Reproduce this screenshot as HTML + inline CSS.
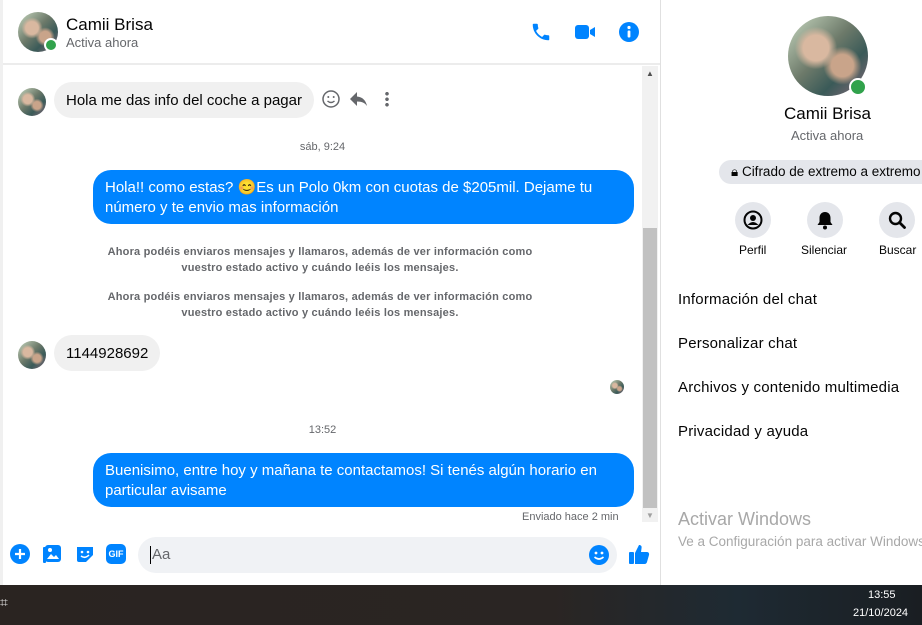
<!DOCTYPE html>
<html><head><meta charset="utf-8"><style>
*{box-sizing:border-box;margin:0;padding:0}
body{width:922px;height:625px;overflow:hidden;background:#fff;font-family:"Liberation Sans",sans-serif;position:relative;color:#050505}
.abs{position:absolute}
.av{border-radius:50%;background:radial-gradient(circle at 35% 40%,#d9b8a0 0 18%,transparent 30%),radial-gradient(circle at 68% 62%,#c9a48a 0 15%,transparent 26%),linear-gradient(135deg,#c8d8c0,#6d7a6a 45%,#3a5a58 70%,#8a6a7a);}
.dot{border-radius:50%;background:#31a24c;border:2px solid #fff}
.bub{border-radius:18px;font-size:15px;line-height:20px;padding:9px 12px 7px}
.in{background:#f0f0f0}
.out{background:#0084ff;color:#fff}
.sys{font-size:12px;color:#65676b;text-align:center;line-height:16px;font-weight:bold}
.menu{font-size:15px;color:#050505;left:678px;letter-spacing:0.2px}
.cb{width:36px;height:36px;border-radius:50%;background:#e4e6eb;display:flex;align-items:center;justify-content:center}
</style></head><body>
<div class="abs" style="left:0;top:0;width:3px;height:585px;background:#f0f0f0"></div>
<div class="abs" style="left:660px;top:0;width:1px;height:585px;background:#e0e0e0"></div>
<div class="abs av" style="left:18px;top:12px;width:40px;height:40px"></div>
<div class="abs dot" style="left:44px;top:38px;width:14px;height:14px"></div>
<div class="abs" style="left:66px;top:15px;font-size:17px">Camii Brisa</div>
<div class="abs" style="left:66px;top:35px;font-size:13px;color:#65676b">Activa ahora</div>
<svg class="abs" style="left:530px;top:21px" width="22" height="22" viewBox="0 0 24 24"><path fill="#0084ff" d="M6.6 10.8c1.4 2.8 3.8 5.1 6.6 6.6l2.2-2.2c.3-.3.7-.4 1-.2 1.1.4 2.3.6 3.6.6.6 0 1 .4 1 1V20c0 .6-.4 1-1 1C10.6 21 3 13.4 3 4c0-.6.4-1 1-1h3.5c.6 0 1 .4 1 1 0 1.3.2 2.5.6 3.6.1.3 0 .7-.2 1z"/></svg>
<svg class="abs" style="left:574px;top:22px" width="22" height="20" viewBox="0 0 22 20"><rect x="1" y="3" width="14" height="14" rx="3" fill="#0084ff"/><path d="M16 8l5-3v10l-5-3z" fill="#0084ff"/></svg>
<svg class="abs" style="left:618px;top:21px" width="22" height="22" viewBox="0 0 22 22"><circle cx="11" cy="11" r="10" fill="#0084ff"/><circle cx="11" cy="6.5" r="1.6" fill="#fff"/><rect x="9.6" y="9.5" width="2.8" height="7" rx="1" fill="#fff"/></svg>
<div class="abs" style="left:3px;top:63px;width:657px;height:2px;background:#ececec"></div>
<div class="abs" style="left:642px;top:66px;width:16px;height:456px;background:#f1f1f1"></div>
<div class="abs" style="left:643px;top:228px;width:14px;height:280px;background:#c1c1c1"></div>
<div class="abs" style="left:646px;top:69px;font-size:8px;color:#505050">▲</div>
<div class="abs" style="left:646px;top:511px;font-size:8px;color:#a0a0a0">▼</div>
<div class="abs av" style="left:18px;top:88px;width:28px;height:28px"></div>
<div class="abs bub in" style="left:54px;top:82px">Hola me das info del coche a pagar</div>
<svg class="abs" style="left:321px;top:89px" width="20" height="20" viewBox="0 0 20 20"><circle cx="10" cy="10" r="8" fill="none" stroke="#65676b" stroke-width="1.5"/><circle cx="7.3" cy="8" r="1" fill="#65676b"/><circle cx="12.7" cy="8" r="1" fill="#65676b"/><path d="M6.5 12q3.5 3 7 0" fill="none" stroke="#65676b" stroke-width="1.4"/></svg>
<svg class="abs" style="left:349px;top:89px" width="20" height="20" viewBox="0 0 20 20"><path d="M8 3L1 10l7 7v-4.5c5 0 8 1.5 10 4.5-1-5-4-9-10-9.5z" fill="#65676b"/></svg>
<div class="abs" style="left:385px;top:91px;width:4px;height:16px;background:radial-gradient(circle,#65676b 1.6px,transparent 2px) 0 0/4px 5.5px"></div>
<div class="abs sys" style="left:3px;top:139px;width:639px;font-weight:normal;font-size:11px">sáb, 9:24</div>
<div class="abs bub out" style="left:93px;top:170px;width:541px;padding:8px 12px 6px">Hola!! como estas? 😊Es un Polo 0km con cuotas de $205mil. Dejame tu número y te envio mas información</div>
<div class="abs sys" style="left:95px;top:244px;width:450px;font-size:11px;letter-spacing:0.2px">Ahora podéis enviaros mensajes y llamaros, además de ver información como vuestro estado activo y cuándo leéis los mensajes.</div>
<div class="abs sys" style="left:95px;top:289px;width:450px;font-size:11px;letter-spacing:0.2px">Ahora podéis enviaros mensajes y llamaros, además de ver información como vuestro estado activo y cuándo leéis los mensajes.</div>
<div class="abs av" style="left:18px;top:341px;width:28px;height:28px"></div>
<div class="abs bub in" style="left:54px;top:335px">1144928692</div>
<div class="abs av" style="left:610px;top:380px;width:14px;height:14px"></div>
<div class="abs sys" style="left:3px;top:422px;width:639px;font-weight:normal;font-size:11px">13:52</div>
<div class="abs bub out" style="left:93px;top:453px;width:541px;padding:8px 12px 6px">Buenisimo, entre hoy y mañana te contactamos! Si tenés algún horario en particular avisame</div>
<div class="abs" style="left:522px;top:511px;font-size:11px;color:#65676b">Enviado hace 2 min</div>
<svg class="abs" style="left:10px;top:544px" width="20" height="20" viewBox="0 0 20 20"><circle cx="10" cy="10" r="10" fill="#0084ff"/><path d="M10 5v10M5 10h10" stroke="#fff" stroke-width="2.2"/></svg>
<svg class="abs" style="left:42px;top:544px" width="20" height="20" viewBox="0 0 20 20"><rect x="3" y="1" width="16" height="17" rx="3" fill="#0084ff"/><rect x="1" y="3" width="3" height="16" rx="1" fill="#0084ff"/><circle cx="8" cy="6" r="2" fill="#fff"/><path d="M5 15l4-5 3 3 2-2 3 4z" fill="#fff"/></svg>
<svg class="abs" style="left:75px;top:544px" width="20" height="20" viewBox="0 0 20 20"><path d="M2 3h16v8l-7 7H4a2 2 0 01-2-2z" fill="#0084ff"/><circle cx="7" cy="8" r="1.3" fill="#fff"/><circle cx="13" cy="8" r="1.3" fill="#fff"/><path d="M6 12q4 3 8-1" stroke="#fff" fill="none" stroke-width="1.5"/></svg>
<div class="abs" style="left:106px;top:544px;width:20px;height:20px;background:#0084ff;border-radius:5px;color:#fff;font-size:9px;font-weight:bold;text-align:center;line-height:20px">GIF</div>
<div class="abs" style="left:138px;top:537px;width:479px;height:36px;background:#f0f2f5;border-radius:18px"></div>
<div class="abs" style="left:150px;top:546px;font-size:15px;color:#65676b;border-left:1px solid #000;padding-left:1px;line-height:18px">Aa</div>
<svg class="abs" style="left:589px;top:545px" width="20" height="20" viewBox="0 0 20 20"><circle cx="10" cy="10" r="10" fill="#0084ff"/><circle cx="7" cy="8" r="1.4" fill="#fff"/><circle cx="13" cy="8" r="1.4" fill="#fff"/><path d="M5.5 12q4.5 4 9 0" stroke="#fff" fill="none" stroke-width="1.6"/></svg>
<svg class="abs" style="left:628px;top:543px" width="22" height="22" viewBox="0 0 22 22"><rect x="1" y="9" width="5" height="12" rx="1" fill="#0084ff"/><path d="M7 10l4-8c2 0 3 1 2.5 3.5L13 9h6c1.5 0 2.5 1.5 2 3l-2 7c-.3 1-1 2-2.5 2H7z" fill="#0084ff"/></svg>
<div class="abs av" style="left:788px;top:16px;width:80px;height:80px"></div>
<div class="abs dot" style="left:849px;top:78px;width:18px;height:18px"></div>
<div class="abs" style="left:784px;top:104px;font-size:17px">Camii Brisa</div>
<div class="abs" style="left:791px;top:128px;font-size:13px;color:#65676b">Activa ahora</div>
<div class="abs" style="left:719px;top:160px;width:220px;height:24px;background:#e4e6eb;border-radius:12px;font-size:13.5px;line-height:24px;padding-left:12px;white-space:nowrap">🔒︎<span> Cifrado de extremo a extremo</span></div>
<div class="abs cb" style="left:735px;top:202px"><svg width="20" height="20" viewBox="0 0 20 20"><circle cx="10" cy="10" r="8.5" fill="none" stroke="#050505" stroke-width="2"/><circle cx="10" cy="8" r="3" fill="#050505"/><path d="M4.5 15q5.5-6 11 0" fill="#050505"/></svg></div>
<div class="abs cb" style="left:807px;top:202px"><svg width="18" height="20" viewBox="0 0 18 20"><path d="M9 2c3.5 0 5.5 2.5 5.5 6v4l2 3H1.5l2-3V8C3.5 4.5 5.5 2 9 2z" fill="#050505"/><circle cx="9" cy="17.5" r="2" fill="#050505"/></svg></div>
<div class="abs cb" style="left:879px;top:202px"><svg width="20" height="20" viewBox="0 0 20 20"><circle cx="8.5" cy="8.5" r="5.5" fill="none" stroke="#050505" stroke-width="2.4"/><path d="M12.5 12.5l5 5" stroke="#050505" stroke-width="2.8" stroke-linecap="round"/></svg></div>
<div class="abs" style="left:739px;top:243px;font-size:12px;color:#050505">Perfil</div>
<div class="abs" style="left:801px;top:243px;font-size:12px;color:#050505">Silenciar</div>
<div class="abs" style="left:879px;top:243px;font-size:12px;color:#050505">Buscar</div>
<div class="abs menu" style="top:291px">Información del chat</div>
<div class="abs menu" style="top:335px">Personalizar chat</div>
<div class="abs menu" style="top:379px">Archivos y contenido multimedia</div>
<div class="abs menu" style="top:423px">Privacidad y ayuda</div>
<div class="abs" style="left:678px;top:509px;font-size:18px;color:#a8a8a8;white-space:nowrap">Activar Windows</div>
<div class="abs" style="left:678px;top:534px;font-size:13.5px;color:#a8a8a8;white-space:nowrap">Ve a Configuración para activar Windows.</div>
<div class="abs" style="left:0;top:585px;width:922px;height:40px;background:linear-gradient(90deg,#2a2421,#2a2523 60%,#1e2a33 80%,#1a1e22)"></div>
<div class="abs" style="left:0;top:594px;font-size:14px;color:#ddd">⌗</div>
<div class="abs" style="left:868px;top:589px;font-size:11px;color:#fff">13:55</div>
<div class="abs" style="left:853px;top:607px;font-size:11px;color:#fff">21/10/2024</div>
</body></html>
